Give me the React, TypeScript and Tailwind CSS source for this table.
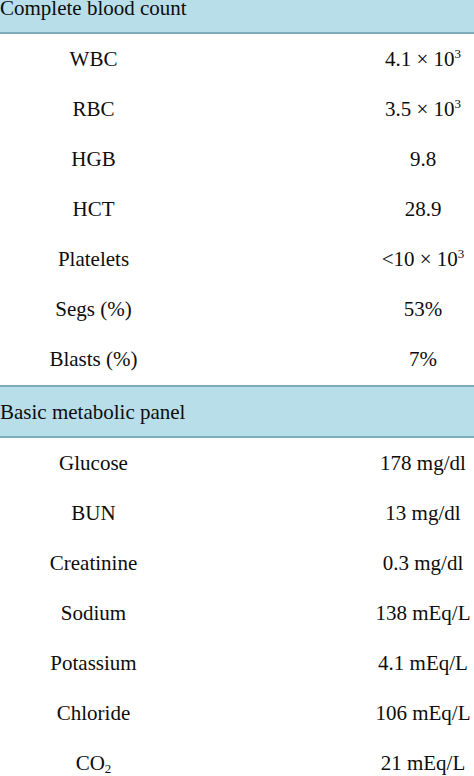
import React from "react";

const Sup = ({ children }: { children: React.ReactNode }) => (
  <sup className="text-[13px] relative -top-[8px] align-baseline">{children}</sup>
);

type Row = { label: React.ReactNode; value: React.ReactNode };

const cbc: Row[] = [
  { label: "WBC", value: <>4.1 × 10<Sup>3</Sup></> },
  { label: "RBC", value: <>3.5 × 10<Sup>3</Sup></> },
  { label: "HGB", value: "9.8" },
  { label: "HCT", value: "28.9" },
  { label: "Platelets", value: <>&lt;10 × 10<Sup>3</Sup></> },
  { label: "Segs (%)", value: "53%" },
  { label: "Blasts (%)", value: "7%" },
];

const bmp: Row[] = [
  { label: "Glucose", value: "178 mg/dl" },
  { label: "BUN", value: "13 mg/dl" },
  { label: "Creatinine", value: "0.3 mg/dl" },
  { label: "Sodium", value: "138 mEq/L" },
  { label: "Potassium", value: "4.1 mEq/L" },
  { label: "Chloride", value: "106 mEq/L" },
  {
    label: (
      <>
        CO<sub className="text-[13px] relative top-[3px] align-baseline">2</sub>
      </>
    ),
    value: "21 mEq/L",
  },
];

const Header = ({ title, className = "" }: { title: string; className?: string }) => (
  <div
    className={`h-[53px] bg-[#b8dee9] border-y-2 border-[#7eaebc] flex items-center ${className}`}
  >
    <span className="pt-[2px] text-[21px] leading-none">{title}</span>
  </div>
);

const DataRow = ({ row }: { row: Row }) => (
  <div className="h-[50px] flex items-center text-[21px] leading-none">
    <div className="w-[187px] text-center">{row.label}</div>
    <div className="flex-1" />
    <div className="w-[102px] text-center whitespace-nowrap">{row.value}</div>
  </div>
);

export default function App() {
  return (
    <div
      className="w-[474px] h-[776px] overflow-hidden bg-white text-[#0d0d0d]"
      style={{ fontFamily: '"Liberation Serif", "Times New Roman", serif' }}
    >
      <Header title="Complete blood count" className="-mt-[19px]" />
      {cbc.map((r, i) => (
        <DataRow key={i} row={r} />
      ))}
      <div className="h-[1px]" />
      <Header title="Basic metabolic panel" />
      {bmp.map((r, i) => (
        <DataRow key={i} row={r} />
      ))}
    </div>
  );
}
